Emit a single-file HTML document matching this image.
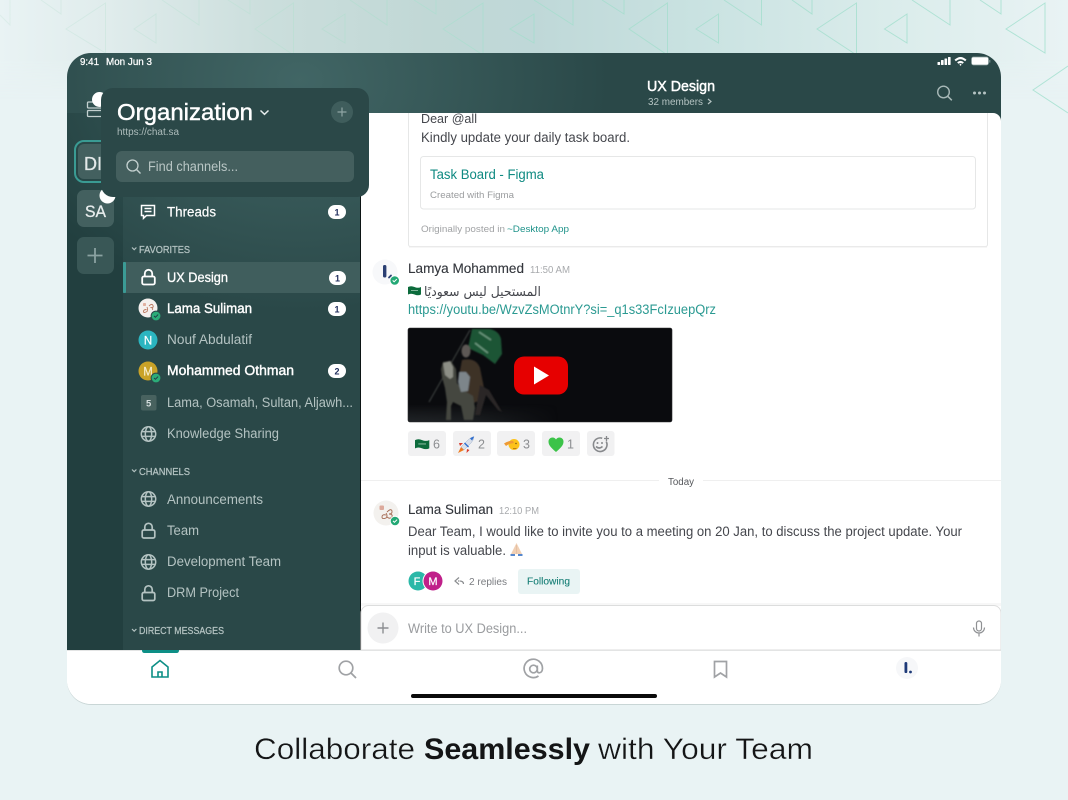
<!DOCTYPE html>
<html lang="en"><head><meta charset="utf-8"><title>Collaborate Seamlessly</title>
<style>
html,body{margin:0;padding:0;background:#e9f3f4;width:1068px;height:800px;overflow:hidden}
svg{display:block}
text{font-family:"Liberation Sans","Noto Sans CJK SC",sans-serif;white-space:pre}
.dim{fill:#b4c3c2;font-size:13.5px}
.w{fill:#fff;font-size:13.5px}
.b{fill:#fff;font-size:13.5px;stroke:#fff;stroke-width:.4}
.sec{fill:#b4c3c2;font-size:10px;stroke:#b4c3c2;stroke-width:.25}
.n{fill:#1f2d5c;font-size:9px;font-weight:700;text-anchor:middle}
.m{fill:#45474d;font-size:13.5px}
.name{fill:#33363c;font-size:13.5px;stroke:#33363c;stroke-width:.12}
.t{fill:#a8aaad;font-size:10px}
.c{fill:#8c8e91;font-size:12.5px}
.ic{fill:none;stroke:#b4c3c2;stroke-width:1.7}
.chev{fill:none;stroke:#b4c3c2;stroke-width:1.2}
</style></head><body>
<svg width="1068" height="800" viewBox="0 0 1068 800" xmlns="http://www.w3.org/2000/svg">
<defs>
<linearGradient id="bg" x1="0" x2="1" y1="0" y2="0"><stop offset="0" stop-color="#e9f3f4"/><stop offset=".1" stop-color="#e0ecec"/><stop offset=".25" stop-color="#cbdedc"/><stop offset=".4" stop-color="#c1d8d6"/><stop offset=".5" stop-color="#bfd8d8"/><stop offset=".65" stop-color="#c9e2e1"/><stop offset=".85" stop-color="#dcedec"/><stop offset="1" stop-color="#e9f3f4"/></linearGradient>
<linearGradient id="fade" x1="0" x2="0" y1="0" y2="1"><stop offset="0" stop-color="#fff"/><stop offset=".6" stop-color="#fff"/><stop offset="1" stop-color="#000"/></linearGradient>
<linearGradient id="tri" gradientUnits="userSpaceOnUse" x1="0" x2="1068" y1="0" y2="0"><stop offset="0" stop-color="#dcedea"/><stop offset=".3" stop-color="#bcdcd3"/><stop offset=".5" stop-color="#aadccf"/><stop offset="1" stop-color="#b0e4d6"/></linearGradient>
<mask id="fm"><rect width="1068" height="100" fill="url(#fade)"/></mask>
<clipPath id="dev"><rect x="67" y="53" width="934" height="651" rx="24"/></clipPath>
<clipPath id="vid"><rect x="408" y="328" width="264" height="94" rx="2"/></clipPath>
<clipPath id="main"><rect x="361" y="113" width="640" height="492"/></clipPath>
<radialGradient id="glow" gradientUnits="userSpaceOnUse" cx="0" cy="0" r="310" gradientTransform="translate(300 80) scale(1 .75)"><stop offset="0" stop-color="#4a7170" stop-opacity=".72"/><stop offset=".6" stop-color="#4a7170" stop-opacity=".3"/><stop offset="1" stop-color="#4a7170" stop-opacity="0"/></radialGradient>
<linearGradient id="floor" x1="0" x2="0" y1="0" y2="1"><stop offset="0" stop-color="#2a2d30" stop-opacity="0"/><stop offset="1" stop-color="#23272a"/></linearGradient>
<linearGradient id="floorx" x1="0" x2="1" y1="0" y2="0"><stop offset="0" stop-color="#ddd"/><stop offset=".4" stop-color="#bbb"/><stop offset="1" stop-color="#000"/></linearGradient>
<mask id="fx"><rect x="408" y="328" width="150" height="94" fill="url(#floorx)"/></mask>
<filter id="soft" x="-10%" y="-10%" width="120%" height="120%"><feGaussianBlur stdDeviation=".7"/></filter>
<g id="lock"><rect x="-6.3" y="-.5" width="12.6" height="8" rx="1.6"/><path d="M-3.7-.5v-3a3.7 3.7 0 0 1 7.4 0v3"/></g>
<g id="globe"><circle r="7.2"/><ellipse rx="3.2" ry="7.2"/><path d="M-7-2.4H7M-7 2.4H7"/></g>
<g id="ok"><circle r="5.2" fill="#fff"/><circle r="4.3" fill="#23a875"/><path d="M-2-.1-.6 1.3 2.1-1.4" fill="none" stroke="#fff" stroke-width="1"/></g>
<g id="okd"><circle r="5.4" fill="#2a4848"/><circle r="4.4" fill="#2bac78"/><path d="M-2-.1-.6 1.3 2.1-1.4" fill="none" stroke="#234" stroke-width=".9"/></g>
<g id="flag"><path d="M0 1q3-1.500 6.500 0t6.500 0v7.500q-3 1.500-6.500 0T0 8.500Z" fill="#0c6b3c"/><path d="M3 4.500h7" stroke="#8fbfa5" stroke-width=".9"/></g>
</defs>

<rect width="1068" height="800" fill="#e9f3f4"/>
<rect width="1068" height="100" fill="url(#bg)" mask="url(#fm)"/>
<g fill="none" stroke="url(#tri)" stroke-width="1">
<path d="M66 29 105.500 3V53ZM134 29 156 14V43ZM255 29 293.500 3V55ZM322 29 345 14V43ZM443 29 483 3V55ZM510 29 534 14V43ZM629 29 667.500 3V55ZM696 29 718.500 14V43ZM817 29 856.500 3V55ZM884.500 29 907 14V43ZM1006 29 1045 3V53Z"/>
<path d="M0 15 10 25V0M41 0 61 14V0M162 0 199 25V0M228 0 250 14V0M350 0 387 25V0M414 0 436 14V0M534 0 573 25V0M602 0 624 14V0M724 0 761.500 25V0M792 0 812 14V0M912 0 950 25V0M980 0 1001 14V0"/>
<path d="M1068 66 1033 90 1068 113"/>
</g>

<!-- device -->
<rect x="67" y="54" width="934" height="651" rx="24" fill="#c9d6d6"/>
<g clip-path="url(#dev)">
<rect x="67" y="53" width="934" height="651" fill="#fff"/>
<rect x="67" y="53" width="934" height="60" fill="#2a4848"/>
<rect x="67" y="113" width="56" height="537" fill="#223f3f"/>
<rect x="123" y="113" width="237" height="537" fill="#2a4848"/>
<rect x="67" y="53" width="640" height="340" fill="url(#glow)"/>
<rect x="360" y="113" width="1" height="537" fill="#0c1414"/>

<!-- main -->
<rect x="361" y="113" width="640" height="537" fill="#fff"/>
<path d="M993 113a8 8 0 0 1 8 8v-8Z" fill="#2a4848"/>

<g clip-path="url(#main)">
<rect x="408.500" y="100" width="579" height="146.500" rx="2" fill="#fff" stroke="#e6e7e7"/>
<rect x="409" y="246.500" width="578" height="1" fill="#eee"/>
<text x="421" y="123" class="m" textLength="56" lengthAdjust="spacingAndGlyphs" style="font-size:13px">Dear @all</text>
<text x="421" y="142" class="m" textLength="209" lengthAdjust="spacingAndGlyphs" style="font-size:13.5px">Kindly update your daily task board.</text>
<rect x="420.500" y="156.500" width="555" height="52.500" rx="3" fill="#fff" stroke="#e6e7e7"/>
<text x="430" y="179" textLength="114" lengthAdjust="spacingAndGlyphs" style="font-size:13.5px;fill:#0f8a82">Task Board - Figma</text>
<text x="430" y="198" textLength="84" lengthAdjust="spacingAndGlyphs" style="font-size:9.500px;fill:#9a9c9e">Created with Figma</text>
<text x="421" y="232" textLength="84" lengthAdjust="spacingAndGlyphs" style="font-size:9.500px;fill:#a0a2a4">Originally posted in</text>
<text x="507" y="232" textLength="62" lengthAdjust="spacingAndGlyphs" style="font-size:9.500px;fill:#1f938a">~Desktop App</text>

<circle cx="385" cy="272" r="12.500" fill="#f7f8fa"/>
<rect x="383" y="265" width="3.400" height="12.500" rx="1.500" fill="#2b3f73"/>
<path d="M389 277.500l2-2" stroke="#2b3f73" stroke-width="1.800" stroke-linecap="round"/>
<use href="#ok" x="394.700" y="280.500"/>
<text x="408" y="273" class="name" textLength="116" lengthAdjust="spacingAndGlyphs">Lamya Mohammed</text>
<text x="530" y="273" class="t" textLength="40" lengthAdjust="spacingAndGlyphs">11:50 AM</text>
<use href="#flag" x="408" y="286"/>
<text x="541" y="296" direction="rtl" style="font-size:13px;fill:#45474d;font-family:'DejaVu Sans','Noto Sans CJK SC',sans-serif" textLength="117" lengthAdjust="spacingAndGlyphs">المستحيل ليس سعوديًا</text>
<text x="408" y="314" textLength="308" lengthAdjust="spacingAndGlyphs" style="font-size:13.500px;fill:#2b9a92">https://youtu.be/WzvZsMOtnrY?si=_q1s33FcIzuepQrz</text>

<!-- video -->
<g clip-path="url(#vid)">
<rect x="408" y="328" width="264" height="94" fill="#0a0b0e"/>
<rect x="408" y="404" width="150" height="18" fill="url(#floor)" mask="url(#fx)"/>
<g filter="url(#soft)">
<path d="M470 330 429 402" stroke="#4a4f4c" stroke-width=".8"/>
<path d="M472 329h18q9 2 11 10l1 15-7 10-12-9-15-7Z" fill="#1d5436"/>
<path d="M479 332l12 8M475 343l13 10" stroke="#6d9a80" stroke-width="1.500"/>
<ellipse cx="466" cy="351" rx="4.500" ry="6.500" fill="#5d5955"/>
<path d="M462 360q14-3 18 8l4 20-3 12-10 4-7-10-5-18Z" fill="#3d3027"/>
<path d="M443 362l8-1 5 8 1 14 5 6 6 4 5 3 2 12-2 12h-9l-3-14-8-4-2 4v14h-5l1-18-2-14-3-11-1-8Z" fill="#45473f"/>
<path d="M443 363l7-2 3 6v10l-3 2-5-4Z" fill="#8d8f86"/>
<path d="M459 372h7l4 5-2 14-7 1-3-10Z" fill="#7d858a"/>
<path d="M480 385l9 5 13 22-4-2-12-15-6 20h-5Z" fill="#2a2725"/>
</g>
</g>
<rect x="408" y="328" width="264" height="94" rx="2" fill="none" stroke="#2b2c2e" stroke-width=".6"/>
<rect x="514" y="356.500" width="54" height="38" rx="10" fill="#e60000"/>
<path d="M534 366.500 549 375.500 534 384.500Z" fill="#fff"/>

<!-- reactions -->
<g fill="#f1f1f2"><rect x="408" y="431" width="38" height="25" rx="3"/><rect x="453" y="431" width="38" height="25" rx="3"/><rect x="497" y="431" width="38" height="25" rx="3"/><rect x="542" y="431" width="38" height="25" rx="3"/><rect x="587" y="431" width="27.500" height="25" rx="3"/></g>
<use href="#flag" transform="translate(415 439) scale(1.100)"/>
<text x="433" y="448.500" class="c">6</text>
<path d="M461 447l7-7q3-3 6-3.500-.5 4-3 6.500l-7 7Z" fill="#d9dfe9" stroke="#8ea3c4" stroke-width=".4"/>
<path d="M470 438.500q2-1.500 4-2-.5 2-2 4ZM465 442.500l4 4-1 1-4-4Z" fill="#2f6fd0"/>
<path d="M458 453l3-6 3 3Z" fill="#ef7a1e"/><path d="M459 443l4 0-3 3ZM467 449l-.5 4 3-3Z" fill="#d83a2c"/>
<text x="478" y="448.500" class="c">2</text>
<circle cx="514" cy="444.500" r="5.500" fill="#fcc21b"/>
<path d="M504 443.500q4-3 9-2.500l1 2-5 1-3 2Z" fill="#ee9a35"/><circle cx="516" cy="443.500" r=".7" fill="#6b4a10"/><path d="M513 448.500h3.500" stroke="#a5691e" stroke-width=".8"/>
<text x="523" y="448.500" class="c">3</text>
<path d="M556 452C550 447 548.500 444.500 548.500 441.500C548.500 439 550.500 437.500 552.500 437.500C554 437.500 555.200 438.300 556 439.500C556.800 438.300 558 437.500 559.500 437.500C561.500 437.500 563.500 439 563.500 441.500C563.500 444.500 562 447 556 452Z" fill="#3cc349"/>
<text x="567" y="448.500" class="c">1</text>
<g fill="none" stroke="#87898c" stroke-width="1.600"><path d="M606.200 441.500a6.800 6.800 0 1 1-4-3.300"/><path d="M596 446.500q3 3 6.500 0"/><path d="M604 438.500h5M606.500 436v5" stroke-width="1.300"/></g>
<circle cx="597.500" cy="443" r="1" fill="#87898c"/><circle cx="602" cy="443" r="1" fill="#87898c"/>

<!-- today -->
<rect x="361" y="480" width="640" height="1" fill="#efefef"/>
<rect x="659" y="474" width="44" height="14" fill="#fff"/>
<text x="668" y="485" textLength="26" lengthAdjust="spacingAndGlyphs" style="font-size:10px;fill:#55575b">Today</text>

<circle cx="386" cy="513" r="12.500" fill="#f3f1ee"/>
<rect x="379.500" y="505.500" width="4.500" height="4.500" rx="1" fill="#dca99b"/>
<path d="M386 515q-4-1-4 2 0 2.500 4 1 2-2 0-5M387 512q4-4 5-1 .5 3-3 3 4 0 3 3-2 2.500-5 0" fill="none" stroke="#a3674f" stroke-width=".9"/>
<use href="#ok" x="395" y="521"/>
<text x="408" y="514" class="name" textLength="85" lengthAdjust="spacingAndGlyphs">Lama Suliman</text>
<text x="499" y="514" class="t" textLength="40" lengthAdjust="spacingAndGlyphs">12:10 PM</text>
<text x="408" y="536" class="m" textLength="554" lengthAdjust="spacingAndGlyphs">Dear Team, I would like to invite you to a meeting on 20 Jan, to discuss the project update. Your</text>
<text x="408" y="555" class="m" textLength="98" lengthAdjust="spacingAndGlyphs">input is valuable.</text>
<path d="M516.500 543l-3.500 7-2 4h11l-2-4Z" fill="#f1d0b5"/><path d="M516.500 545v9" stroke="#d9b294" stroke-width=".5"/><path d="M510.500 555h4.500M518 555h4.500" stroke="#3f78c8" stroke-width="1.800"/>

<circle cx="418" cy="581" r="9.500" fill="#2bb8a8"/>
<text x="417" y="585" text-anchor="middle" style="font-size:11px;fill:#fff;stroke:#fff;stroke-width:.2">F</text>
<circle cx="433" cy="581" r="10.500" fill="#fff"/><circle cx="433" cy="581" r="9.500" fill="#c0208a"/>
<text x="433" y="585" text-anchor="middle" style="font-size:11px;fill:#fff;stroke:#fff;stroke-width:.2">M</text>
<path d="M459 577.500l-4 3.500 4 3.500M463.500 584q0-3-4-3M459 581h-1" fill="none" stroke="#8a8c8f" stroke-width="1.200"/>
<text x="469" y="585" textLength="38" lengthAdjust="spacingAndGlyphs" style="font-size:10.500px;fill:#7a7c80">2 replies</text>
<rect x="518" y="569" width="62" height="25" rx="3" fill="#e9f4f4"/>
<text x="527" y="584.500" textLength="43" lengthAdjust="spacingAndGlyphs" style="font-size:10.500px;fill:#1a8078;stroke:#1a8078;stroke-width:.12">Following</text>
</g>

<!-- composer -->
<rect x="361" y="603" width="640" height="3" fill="#f7f7f7"/>
<path d="M361 650V613a7.500 7.500 0 0 1 7.500-7.500H993.500a7.500 7.500 0 0 1 7.500 7.500v37Z" fill="#fff" stroke="#dcdddd"/>
<circle cx="383" cy="628" r="15.500" fill="#f1f1f2"/>
<path d="M377.500 628h11M383 622.500v11" stroke="#8c8e91" stroke-width="1.400"/>
<text x="408" y="633" textLength="119" lengthAdjust="spacingAndGlyphs" style="font-size:13.500px;fill:#9a9c9f">Write to UX Design...</text>
<g fill="none" stroke="#8f9194" stroke-width="1.200"><rect x="976.500" y="621" width="5" height="10" rx="2.500"/><path d="M973.500 627.500a5.500 5.500 0 0 0 11 0M979 633.500v3"/></g>

<!-- tabbar -->
<rect x="67" y="650" width="934" height="54" fill="#fff"/>
<rect x="67" y="650" width="934" height="1" fill="#e3e4e4"/>
<path d="M142 650h37v.5q0 2.500-2.500 2.500h-32q-2.500 0-2.500-2.500Z" fill="#0d8f86"/>
<path d="M152 677v-10l8-6.500 8 6.500v10Z M158 677v-5h4v5" fill="none" stroke="#0d8f86" stroke-width="1.600"/>
<circle cx="346" cy="668" r="6.800" fill="none" stroke="#a0a2a5" stroke-width="1.700"/><path d="M351 673l5 5" stroke="#a0a2a5" stroke-width="1.800"/>
<g fill="none" stroke="#a0a2a5" stroke-width="1.700"><circle cx="533.500" cy="669" r="3.800"/><path d="M537.300 665.500v5q0 2.300 2 2.300 3-.3 3.200-4.300a9.200 9.200 0 1 0-4 7.500"/></g>
<path d="M714.500 661.500h12v15.500l-6-4-6 4Z" fill="none" stroke="#a0a2a5" stroke-width="1.700"/>
<circle cx="907" cy="668" r="11" fill="#f6f7f9"/>
<rect x="904.500" y="662" width="2.800" height="11" rx="1.300" fill="#1e3a78"/><circle cx="910.500" cy="672" r="1.400" fill="#1e3a78"/>
<rect x="411" y="694" width="246" height="4" rx="2" fill="#0a0a0a"/>

<!-- status -->
<text x="80" y="65" textLength="19" lengthAdjust="spacingAndGlyphs" style="font-size:10px;fill:#fff;stroke:#fff;stroke-width:.25">9:41</text>
<text x="106" y="65" textLength="46" lengthAdjust="spacingAndGlyphs" style="font-size:10px;fill:#fff;stroke:#fff;stroke-width:.25">Mon Jun 3</text>
<g fill="#fff"><rect x="937.500" y="62" width="2.600" height="3" rx=".5"/><rect x="941" y="60" width="2.600" height="5" rx=".5"/><rect x="944.500" y="58.500" width="2.600" height="6.500" rx=".5"/><rect x="948" y="57" width="2.600" height="8" rx=".5"/>
<path d="M954.500 59.800q6-5.600 12 0l-1.400 1.500q-4.600-4-9.200 0Zm2.600 2.600q3.400-3 6.800 0l-1.400 1.400q-2-1.600-4 0Zm2.300 2.300 1.100-1.100 1.100 1.100-1.100 1.200Z"/></g>
<rect x="971.500" y="57" width="17" height="8" rx="2" fill="#fff" stroke="#8ba09f" stroke-width=".7"/>
<rect x="989.300" y="60" width="1" height="2.600" fill="#8ba09f"/>

<!-- header -->
<text x="647" y="91" textLength="68" lengthAdjust="spacingAndGlyphs" style="font-size:14.500px;fill:#fff;stroke:#fff;stroke-width:.45">UX Design</text>
<text x="648" y="105" textLength="55" lengthAdjust="spacingAndGlyphs" style="font-size:10px;fill:#b4c3c2">32 members</text>
<path d="M708 99l3 2.500-3 2.500" class="chev"/>
<circle cx="943.500" cy="92" r="5.800" fill="none" stroke="#a8b9b8" stroke-width="1.400"/><path d="M947.800 96.300l4 4" stroke="#a8b9b8" stroke-width="1.500"/>
<g fill="#b4c3c2"><circle cx="974.500" cy="93" r="1.500"/><circle cx="979.500" cy="93" r="1.500"/><circle cx="984.500" cy="93" r="1.500"/></g>

<!-- rail -->
<g fill="none" stroke="#c3d0cf" stroke-width="1.300"><rect x="87.500" y="102" width="17" height="6" rx="1"/><rect x="87.500" y="110.500" width="17" height="6" rx="1"/></g>
<circle cx="99.500" cy="99.500" r="7.500" fill="#fff"/>
<rect x="75" y="141" width="40" height="41" rx="9" fill="none" stroke="#3a9b93" stroke-width="2"/>
<rect x="78" y="144" width="34" height="35" rx="6" fill="#43605f"/>
<text x="84" y="170" style="font-size:18px;fill:#e3e9e9;stroke:#e3e9e9;stroke-width:.3">DI</text>
<rect x="77" y="190" width="37" height="37" rx="7" fill="#43605f"/>
<text x="85" y="217" textLength="21" lengthAdjust="spacingAndGlyphs" style="font-size:17px;fill:#e8eded;stroke:#e8eded;stroke-width:.3">SA</text>
<circle cx="107.500" cy="195.500" r="8" fill="#fff"/>
<rect x="77" y="237" width="37" height="37" rx="7" fill="#395756"/>
<path d="M87.500 255.500h15M95 248v15" stroke="#8aa2a1" stroke-width="1.800"/>

<!-- list -->
<path d="M141.500 206.500h13v10h-8l-3 2.800v-2.800h-2Z M144.500 209.500h7M144.500 212.500h7" fill="none" stroke="#fff" stroke-width="1.500" transform="translate(0 -1)"/>
<text x="167" y="216.500" class="b" textLength="49" lengthAdjust="spacingAndGlyphs" style="stroke-width:.2">Threads</text>
<rect x="328" y="205" width="18" height="14" rx="7" fill="#fff"/><text x="337" y="215.300" class="n">1</text>

<path d="M132 247.500l2.200 2.200 2.200-2.200" class="chev"/>
<text x="139" y="253" class="sec" textLength="51" lengthAdjust="spacingAndGlyphs">FAVORITES</text>

<rect x="123" y="262" width="237" height="31" fill="#405e5d"/>
<rect x="123" y="262" width="3" height="31" rx="1" fill="#3b9b95"/>
<use href="#lock" x="148.500" y="277" fill="none" stroke="#fff" stroke-width="1.800"/>
<text x="167" y="282" class="b" textLength="61" lengthAdjust="spacingAndGlyphs" style="stroke-width:.3">UX Design</text>
<rect x="329" y="271" width="17" height="14" rx="7" fill="#fff"/><text x="337.500" y="281.300" class="n">1</text>

<circle cx="148" cy="308" r="9.500" fill="#f4f0ee"/>
<path d="M146.500 309.500q-3 0-3 2t3.500 0q1-2 0-4.500M149 306q3-3 4-.5t-2.500 2q3 0 2 2.500" fill="none" stroke="#b9785f" stroke-width=".9"/><rect x="143" y="303" width="3" height="3" rx=".8" fill="#e0b0a0"/>
<use href="#okd" x="156" y="316"/>
<text x="167" y="313" class="b" textLength="85" lengthAdjust="spacingAndGlyphs">Lama Suliman</text>
<rect x="328" y="302" width="18" height="14" rx="7" fill="#fff"/><text x="337" y="312.300" class="n">1</text>

<circle cx="148" cy="340" r="9.500" fill="#2bb5c0"/><text x="148" y="344.500" text-anchor="middle" style="font-size:11.500px;fill:#fff;stroke:#fff;stroke-width:.2">N</text>
<text x="167" y="344" class="dim" textLength="85" lengthAdjust="spacingAndGlyphs">Nouf Abdulatif</text>

<circle cx="148" cy="371" r="9.500" fill="#c9a227"/><text x="148" y="375.500" text-anchor="middle" style="font-size:11.500px;fill:#f5edc9;stroke:#f5edc9;stroke-width:.2">M</text>
<use href="#okd" x="156" y="378"/>
<text x="167" y="375" class="b" textLength="127" lengthAdjust="spacingAndGlyphs">Mohammed Othman</text>
<rect x="328" y="364" width="18" height="14" rx="7" fill="#fff"/><text x="337" y="374.300" class="n">2</text>

<rect x="141" y="395" width="15.500" height="15.500" rx="2" fill="#48625f"/><text x="148.700" y="406.500" text-anchor="middle" style="font-size:9.500px;font-weight:700;fill:#d5dedd">5</text>
<text x="167" y="407" class="dim" textLength="186" lengthAdjust="spacingAndGlyphs">Lama, Osamah, Sultan, Aljawh...</text>

<use href="#globe" x="148.500" y="434" class="ic" style="stroke-width:1.500"/>
<text x="167" y="438" class="dim" textLength="112" lengthAdjust="spacingAndGlyphs">Knowledge Sharing</text>

<path d="M132 469.500l2.200 2.200 2.200-2.200" class="chev"/>
<text x="139" y="475" class="sec" textLength="51" lengthAdjust="spacingAndGlyphs">CHANNELS</text>

<use href="#globe" x="148.500" y="499" class="ic" style="stroke-width:1.500"/>
<text x="167" y="504" class="dim" textLength="96" lengthAdjust="spacingAndGlyphs">Announcements</text>
<use href="#lock" x="148.500" y="530.500" class="ic"/>
<text x="167" y="535" class="dim" textLength="32" lengthAdjust="spacingAndGlyphs">Team</text>
<use href="#globe" x="148.500" y="562" class="ic" style="stroke-width:1.500"/>
<text x="167" y="566" class="dim" textLength="114" lengthAdjust="spacingAndGlyphs">Development Team</text>
<use href="#lock" x="148.500" y="593" class="ic"/>
<text x="167" y="597" class="dim" textLength="72" lengthAdjust="spacingAndGlyphs">DRM Project</text>

<path d="M132 629l2.200 2.200 2.200-2.200" class="chev"/>
<text x="139" y="634" class="sec" textLength="85" lengthAdjust="spacingAndGlyphs">DIRECT MESSAGES</text>
</g>

<!-- popup -->
<rect x="101" y="88" width="268" height="109" rx="12" fill="#2b4848"/>
<text x="117" y="120" textLength="136" lengthAdjust="spacingAndGlyphs" style="font-size:23.500px;fill:#fff;stroke:#fff;stroke-width:.45">Organization</text>
<path d="M260.500 110.500l4 3.800 4-3.800" fill="none" stroke="#e6ecec" stroke-width="1.500"/>
<circle cx="342" cy="112" r="11" fill="#3f5d5c"/>
<path d="M337.500 112h9M342 107.500v9" stroke="#8fa5a4" stroke-width="1.200"/>
<text x="117" y="135" textLength="62" lengthAdjust="spacingAndGlyphs" style="font-size:10px;fill:#aebdbc">https://chat.sa</text>
<rect x="116" y="151" width="238" height="31" rx="6" fill="#445f5e"/>
<circle cx="132.500" cy="165.500" r="5.500" fill="none" stroke="#c2cfce" stroke-width="1.300"/><path d="M136.500 169.500l4 4" stroke="#c2cfce" stroke-width="1.400"/>
<text x="148" y="171" textLength="90" lengthAdjust="spacingAndGlyphs" style="font-size:13.500px;fill:#b9c6c5">Find channels...</text>

<!-- caption -->
<text x="254" y="759" textLength="161" lengthAdjust="spacingAndGlyphs" style="font-size:30px;fill:#141516;stroke:#e9f3f4;stroke-width:.35">Collaborate</text>
<text x="424" y="759" textLength="166" lengthAdjust="spacingAndGlyphs" style="font-size:30px;font-weight:700;fill:#141516">Seamlessly</text>
<text x="598" y="759" textLength="215" lengthAdjust="spacingAndGlyphs" style="font-size:30px;fill:#141516;stroke:#e9f3f4;stroke-width:.35">with Your Team</text>
</svg>
</body></html>
